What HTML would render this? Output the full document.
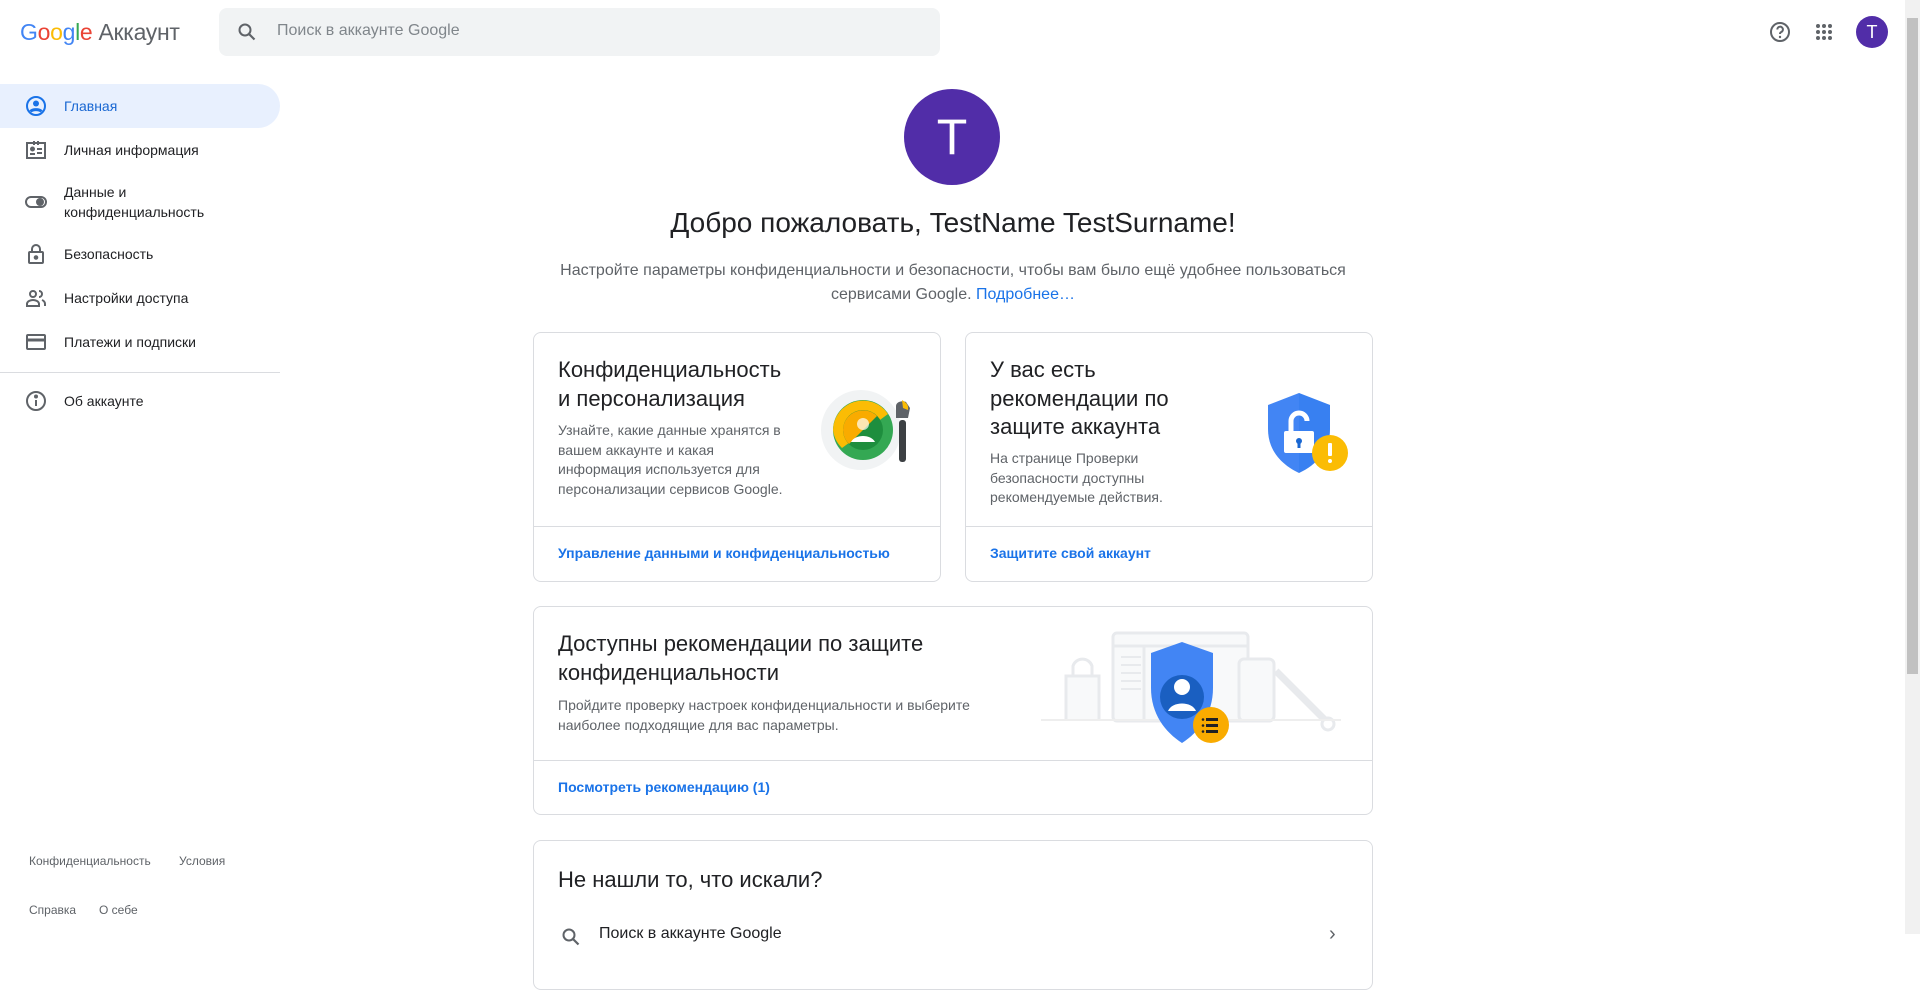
<!DOCTYPE html>
<html><head><meta charset="utf-8">
<style>
*{box-sizing:border-box;margin:0;padding:0}
html,body{width:1920px;height:934px;overflow:hidden;background:#fff;font-family:"Liberation Sans",Arial,sans-serif;color:#202124}
.abs{position:absolute}
.nav{position:absolute;left:0;width:280px;height:44px;display:flex;align-items:center;font-size:14px;color:#202124}
.nav svg{position:absolute;left:24px;width:24px;height:24px}
.nav span{position:absolute;left:64px;line-height:20px}
.card{position:absolute;border:1px solid #dadce0;border-radius:8px;background:#fff;overflow:hidden}
.ct{position:absolute;left:24px;font-size:22px;line-height:28.5px;color:#202124}
.cd{position:absolute;left:24px;font-size:14px;line-height:19.7px;color:#5f6368}
.cl{position:absolute;left:24px;font-size:14px;color:#1a73e8;font-weight:bold}
.hr{position:absolute;left:0;right:0;height:1px;background:#dadce0}
</style></head><body>
<div class="abs" style="left:20px;top:19px;font-size:23px;line-height:26px;letter-spacing:-0.3px">
<span style="color:#4285f4">G</span><span style="color:#ea4335">o</span><span style="color:#fbbc05">o</span><span style="color:#4285f4">g</span><span style="color:#34a853">l</span><span style="color:#ea4335">e</span> <span style="color:#5f6368">Аккаунт</span></div>
<div class="abs" style="left:219px;top:8px;width:721px;height:48px;background:#f1f3f4;border-radius:8px"></div>
<svg class="abs" style="left:235px;top:20px" width="24" height="24" viewBox="0 0 24 24"><circle cx="10" cy="10" r="5.5" fill="none" stroke="#5f6368" stroke-width="2"/><path d="M14 14l5.5 5.5" stroke="#5f6368" stroke-width="2.2"/></svg>
<div class="abs" style="left:277px;top:22px;font-size:16px;color:#80868b">Поиск в аккаунте Google</div>
<svg class="abs" style="left:1768px;top:20px" width="24" height="24" viewBox="0 0 24 24"><circle cx="12" cy="12" r="9" fill="none" stroke="#5f6368" stroke-width="2"/><path d="M9.3 9.5a2.8 2.8 0 1 1 3.8 2.6c-.8.4-1.1.9-1.1 1.9" fill="none" stroke="#5f6368" stroke-width="2"/><circle cx="12" cy="17" r="1.2" fill="#5f6368"/></svg>
<svg class="abs" style="left:1812px;top:20px" width="24" height="24" viewBox="0 0 24 24" fill="#5f6368"><circle cx="6" cy="6" r="2"/><circle cx="12" cy="6" r="2"/><circle cx="18" cy="6" r="2"/><circle cx="6" cy="12" r="2"/><circle cx="12" cy="12" r="2"/><circle cx="18" cy="12" r="2"/><circle cx="6" cy="18" r="2"/><circle cx="12" cy="18" r="2"/><circle cx="18" cy="18" r="2"/></svg>
<div class="abs" style="left:1856px;top:16px;width:32px;height:32px;border-radius:50%;background:#512da8;color:#fff;font-size:18px;text-align:center;line-height:32px">T</div>
<div class="abs" style="left:1905px;top:0;width:15px;height:934px;background:#f1f1f1"></div>
<div class="abs" style="left:1907px;top:18px;width:11px;height:656px;background:#c1c1c1"></div>
<div class="abs" style="left:0;top:84px;width:280px;height:44px;background:#e8f0fe;border-radius:0 22px 22px 0"></div>
<div class="nav" style="top:84px;color:#1967d2"><svg viewBox="0 0 24 24"><circle cx="12" cy="12" r="9" fill="none" stroke="#1a73e8" stroke-width="2"/><circle cx="12" cy="9.5" r="3" fill="#1a73e8"/><path d="M6.5 17.5c2-2.5 9-2.5 11 0" stroke="#1a73e8" stroke-width="3" fill="none"/></svg><span>Главная</span></div>
<div class="nav" style="top:128px"><svg viewBox="0 0 24 24" fill="none" stroke="#5f6368" stroke-width="2"><rect x="3" y="5" width="18" height="15"/><path d="M10 3v4M14 3v4" /><circle cx="8.5" cy="11" r="1.5" fill="#5f6368"/><path d="M6 16h5M13 11h5M13 15h5"/></svg><span>Личная информация</span></div>
<div class="nav" style="top:180px"><svg viewBox="0 0 24 24" fill="none" stroke="#5f6368" stroke-width="2"><rect x="2" y="7" width="20" height="10" rx="5"/><circle cx="16" cy="12" r="3" fill="#5f6368"/></svg><span style="top:2px">Данные и<br>конфиденциальность</span></div>
<div class="nav" style="top:232px"><svg viewBox="0 0 24 24" fill="none" stroke="#5f6368" stroke-width="2"><rect x="5" y="10" width="14" height="11" rx="1"/><path d="M8 10V7a4 4 0 0 1 8 0v3"/><circle cx="12" cy="15.5" r="1.3" fill="#5f6368"/></svg><span>Безопасность</span></div>
<div class="nav" style="top:276px"><svg viewBox="0 0 24 24" fill="none" stroke="#5f6368" stroke-width="2"><circle cx="9" cy="8" r="3"/><path d="M3 20v-2c0-3 4-4 6-4s6 1 6 4v2z"/><path d="M15 5a3 3 0 0 1 0 6M18 14c2 .8 3 2 3 4v2"/></svg><span>Настройки доступа</span></div>
<div class="nav" style="top:320px"><svg viewBox="0 0 24 24" fill="none" stroke="#5f6368" stroke-width="2"><rect x="3" y="5" width="18" height="14" rx="1"/><path d="M3 10h18" stroke-width="3"/></svg><span>Платежи и подписки</span></div>
<div class="abs" style="left:0;top:372px;width:280px;height:1px;background:#dadce0"></div>
<div class="nav" style="top:379px"><svg viewBox="0 0 24 24" fill="none" stroke="#5f6368" stroke-width="2"><circle cx="12" cy="12" r="9"/><path d="M12 11v6"/><circle cx="12" cy="7.5" r="1" fill="#5f6368"/></svg><span>Об аккаунте</span></div>
<div class="abs" style="left:29px;top:854px;font-size:12px;color:#5f6368">Конфиденциальность</div>
<div class="abs" style="left:179px;top:854px;font-size:12px;color:#5f6368">Условия</div>
<div class="abs" style="left:29px;top:903px;font-size:12px;color:#5f6368">Справка</div>
<div class="abs" style="left:99px;top:903px;font-size:12px;color:#5f6368">О себе</div>
<div class="abs" style="left:904px;top:89px;width:96px;height:96px;border-radius:50%;background:#512da8;color:#fff;font-size:50px;line-height:96px;text-align:center">T</div>
<div class="abs" style="left:533px;top:205px;width:840px;text-align:center;font-size:28px;line-height:36px;color:#202124">Добро пожаловать, TestName TestSurname!</div>
<div class="abs" style="left:533px;top:259px;width:840px;text-align:center;font-size:16px;line-height:24px;color:#5f6368">Настройте параметры конфиденциальности и безопасности, чтобы вам было ещё удобнее пользоваться сервисами Google. <span style="color:#1a73e8">Подробнее…</span></div>

<div class="card" style="left:533px;top:332px;width:408px;height:250px">
<div class="ct" style="top:23px">Конфиденциальность<br>и персонализация</div>
<div class="cd" style="top:88px">Узнайте, какие данные хранятся в<br>вашем аккаунте и какая<br>информация используется для<br>персонализации сервисов Google.</div>
<svg class="abs" style="left:280px;top:55px" width="100" height="100" viewBox="0 0 100 100"><circle cx="47" cy="42" r="40" fill="#f1f3f4"/><circle cx="49" cy="42" r="30" fill="#34a853"/><path d="M19 42a30 30 0 0 1 55-16L28 60a30 30 0 0 1-9-18z" fill="#fbbc04"/><circle cx="49" cy="42" r="20" fill="#1e8e3e"/><path d="M29 42a20 20 0 0 1 34-14L35 56a20 20 0 0 1-6-14z" fill="#f9ab00"/><circle cx="49" cy="36" r="6" fill="#fff" opacity=".7"/><path d="M37 54c4-8 20-8 24 0z" fill="#fff"/><rect x="85" y="32" width="7" height="42" rx="3" fill="#3c4043"/><path d="M82 18c0-4 6-6 10-4l4 6-2 10h-12z" fill="#5f6368"/><path d="M88 12c3 2 7 4 6 10l-5-2z" fill="#fbbc04"/></svg>
<div class="hr" style="top:193px"></div>
<div class="cl" style="top:212px">Управление данными и конфиденциальностью</div>
</div>

<div class="card" style="left:965px;top:332px;width:408px;height:250px">
<div class="ct" style="top:23px">У вас есть<br>рекомендации по<br>защите аккаунта</div>
<div class="cd" style="top:116px">На странице Проверки<br>безопасности доступны<br>рекомендуемые действия.</div>
<svg class="abs" style="left:300px;top:58px" width="90" height="86" viewBox="0 0 90 86"><path d="M33 2l31 12v24c0 22-14 36-31 44C16 74 2 60 2 38V14z" fill="#4285f4"/><path d="M33 2v80C50 74 64 60 64 38V14z" fill="#1a73e8" opacity=".25"/><rect x="18" y="40" width="30" height="22" rx="2" fill="#fff"/><path d="M25 40V30a8 8 0 0 1 16 0" fill="none" stroke="#fff" stroke-width="5"/><circle cx="33" cy="50" r="3" fill="#1967d2"/><rect x="31.5" y="51" width="3" height="6" fill="#1967d2"/><circle cx="64" cy="62" r="18" fill="#fbbc04"/><rect x="62" y="52" width="4" height="13" rx="1" fill="#fff"/><circle cx="64" cy="70" r="2" fill="#fff"/></svg>
<div class="hr" style="top:193px"></div>
<div class="cl" style="top:212px">Защитите свой аккаунт</div>
</div>

<div class="card" style="left:533px;top:606px;width:840px;height:209px">
<div class="ct" style="top:23px">Доступны рекомендации по защите<br>конфиденциальности</div>
<div class="cd" style="top:89px">Пройдите проверку настроек конфиденциальности и выберите<br>наиболее подходящие для вас параметры.</div>
<svg class="abs" style="left:497px;top:14px" width="320" height="130" viewBox="0 0 320 130"><g fill="#f8f9fa" stroke="#e8eaed" stroke-width="3"><path d="M35 98V55h33v43"/><path d="M42 55V45a10 10 0 0 1 19 0v10" fill="none"/><rect x="82" y="12" width="135" height="88" rx="4"/><path d="M82 25h135M113 25v75" fill="none"/><rect x="208" y="38" width="35" height="62" rx="5"/><path d="M245 50l52 52" stroke-width="7" fill="none"/></g><path d="M90 36h20M90 44h20M90 52h20M90 60h20M90 68h20" stroke="#e8eaed" stroke-width="2"/><circle cx="297" cy="103" r="6" fill="#fff" stroke="#e8eaed" stroke-width="3"/><path d="M10 99h300" stroke="#eee" stroke-width="2"/><path d="M120 32l31-11 31 11v35c0 26-14 44-31 55-17-11-31-29-31-55z" fill="#4285f4"/><circle cx="151" cy="76" r="22" fill="#1a5fc1"/><circle cx="151" cy="66" r="8" fill="#fff"/><path d="M137 90c4-10 24-10 28 0z" fill="#fff"/><circle cx="180" cy="104" r="18" fill="#f9ab00"/><g fill="#202124"><rect x="175" y="97" width="12" height="3"/><rect x="175" y="103" width="12" height="3"/><rect x="175" y="109" width="12" height="3"/><circle cx="172" cy="98.5" r="1.3"/><circle cx="172" cy="104.5" r="1.3"/><circle cx="172" cy="110.5" r="1.3"/></g></svg>
<div class="hr" style="top:153px"></div>
<div class="cl" style="top:172px">Посмотреть рекомендацию (1)</div>
</div>

<div class="card" style="left:533px;top:840px;width:840px;height:150px">
<div class="ct" style="top:25px">Не нашли то, что искали?</div>
<svg class="abs" style="left:25px;top:84px" width="24" height="24" viewBox="0 0 24 24"><circle cx="10" cy="10" r="5.5" fill="none" stroke="#5f6368" stroke-width="2"/><path d="M14 14l5.5 5.5" stroke="#5f6368" stroke-width="2.2"/></svg>
<div class="abs" style="left:65px;top:84px;font-size:16px;color:#202124">Поиск в аккаунте Google</div>
<div class="abs" style="left:795px;top:82px;font-size:20px;color:#5f6368">›</div>
</div>
</body></html>
